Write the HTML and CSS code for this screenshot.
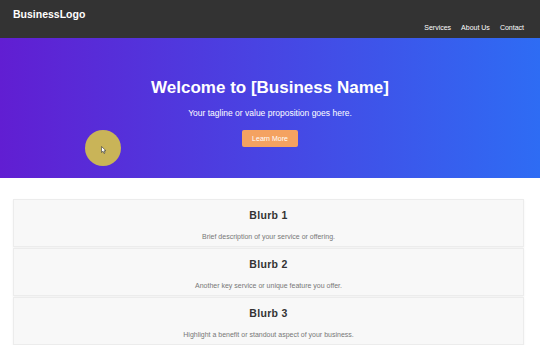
FILE: index.html
```html
<!DOCTYPE html>
<html lang="en">
<head>
  <meta charset="UTF-8" />
  <meta name="viewport" content="width=device-width, initial-scale=1" />
  <title>BusinessLogo</title>
  <link rel="stylesheet" href="styles.css">
</head>
<body>
  <header class="site-header">
    <div class="logo">BusinessLogo</div>
    <nav class="nav">
      <a href="#">Services</a>
      <a href="#">About Us</a>
      <a href="#">Contact</a>
    </nav>
  </header>

  <section class="hero">
    <h1>Welcome to [Business Name]</h1>
    <p>Your tagline or value proposition goes here.</p>
    <a class="btn" href="#">Learn More</a>
    <!-- cursor highlight from the recording -->
    <div class="cursor-dot">
      <svg width="6" height="8" viewBox="0 0 6 8"><path d="M0.5 0.5 L0.5 6.5 L2 5.2 L3 7.5 L4 7 L3 4.8 L5 4.8 Z" fill="#fff" stroke="#333" stroke-width="0.6"/></svg>
    </div>
  </section>

  <section class="blurbs">
    <div class="blurb">
      <h3>Blurb 1</h3>
      <p>Brief description of your service or offering.</p>
    </div>
    <div class="blurb">
      <h3>Blurb 2</h3>
      <p>Another key service or unique feature you offer.</p>
    </div>
    <div class="blurb">
      <h3>Blurb 3</h3>
      <p>Highlight a benefit or standout aspect of your business.</p>
    </div>
  </section>
</body>
</html>
```

FILE: styles.css
```css
body, html {
  margin: 0;
  font-family: "Liberation Sans", Arial, sans-serif;
  background: #fff;
}
.site-header {
  background: #333;
  height: 38px;
  box-sizing: border-box;
  padding: 8px 16px 7px 13px;
  display: flex;
  justify-content: space-between;
  align-items: flex-start;
}
.logo {
  color: #fff;
  font-weight: bold;
  font-size: 10.5px;
}
.nav {
  align-self: flex-end;
  display: flex;
  gap: 10px;
}
.nav a {
  color: #fff;
  text-decoration: none;
  font-size: 7px;
}
.hero {
  position: relative;
  height: 140px;
  box-sizing: border-box;
  padding-top: 40px;
  text-align: center;
  color: #fff;
  background: linear-gradient(to right, #611ed2, #2e6cf4);
}
.hero h1 {
  margin: 0;
  font-size: 17px;
}
.hero p {
  margin: 10px 0 9px;
  font-size: 8.5px;
}
.btn {
  display: inline-block;
  background: #f4a261;
  color: #fff;
  text-decoration: none;
  font-size: 7px;
  padding: 5px 10px;
  border-radius: 2px;
}
.cursor-dot {
  position: absolute;
  left: 85px;
  top: 92px;
  width: 36px;
  height: 36px;
  border-radius: 50%;
  background: #c9b458;
  display: flex;
  justify-content: center;
  align-items: center;
}
.cursor-dot svg {
  margin: 4px 0 0 2px;
}
.blurbs {
  padding: 21px 16px 0 13px;
  display: flex;
  flex-direction: column;
  gap: 1px;
}
.blurb {
  background: #f8f8f8;
  border: 1px solid #ececec;
  box-shadow: 0 1px 2px rgba(0,0,0,0.06);
  height: 48px;
  box-sizing: border-box;
  text-align: center;
  padding-top: 9px;
}
.blurb h3 {
  margin: 0;
  font-size: 10.5px;
  font-weight: 600;
  letter-spacing: 0.3px;
  color: #333;
}
.blurb p {
  margin: 12px 0 0;
  font-size: 7px;
  color: #777;
}
```
